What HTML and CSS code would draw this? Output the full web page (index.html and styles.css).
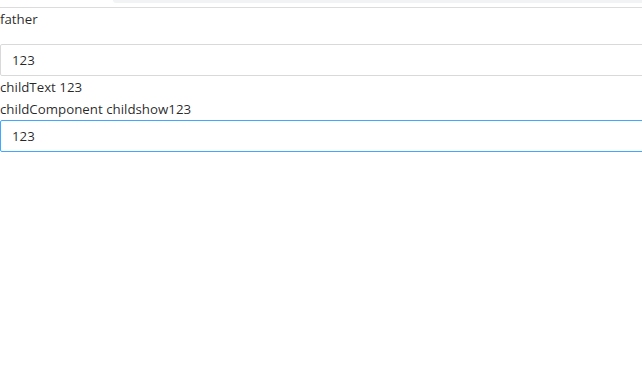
FILE: index.html
```html
<!DOCTYPE html>
<html lang="en">
<head>
    <meta charset="UTF-8">
    <meta name="viewport" content="width=device-width, initial-scale=1.0">
    <title>father</title>
    <link rel="stylesheet" href="styles.css">
</head>
<body>
<div class="chrome">
    <div class="chrome-tab"></div>
</div>
<div class="page">
    <div class="father">
        <div class="label">father</div>
        <input class="text-input" type="text" value="123">
    </div>
    <div class="child">
        <div class="line">childText 123</div>
        <div class="line">childComponent childshow123</div>
        <input class="text-input focused" type="text" value="123">
    </div>
</div>
</body>
</html>
```
FILE: styles.css
```css
html, body {
    margin: 0;
    padding: 0;
    background-color: #fff;
    overflow: hidden;
}
body {
    font-family: "Open Sans", "Noto Sans", sans-serif;
    font-size: 13.3px;
    line-height: 22px;
    color: rgba(0, 0, 0, 0.85);
}
.chrome {
    display: flex;
    height: 7px;
    border-bottom: 1px solid #dcdcdc;
}
.chrome-tab {
    flex: 1;
    margin-left: 113px;
    height: 3px;
    background-color: #f1f3f4;
    border-bottom-left-radius: 10px;
}
.page {
    width: 660px;
}
.label {
    margin-bottom: 14px;
}
.text-input {
    display: block;
    box-sizing: border-box;
    width: 100%;
    height: 32px;
    margin: 0;
    padding: 4px 11px;
    font-family: inherit;
    font-size: 13.3px;
    line-height: 22px;
    color: rgba(0, 0, 0, 0.85);
    border: 1px solid #d9d9d9;
    border-radius: 2px;
    background-color: #fff;
    outline: none;
}
.text-input.focused {
    border-color: #40a9ff;
}
```
